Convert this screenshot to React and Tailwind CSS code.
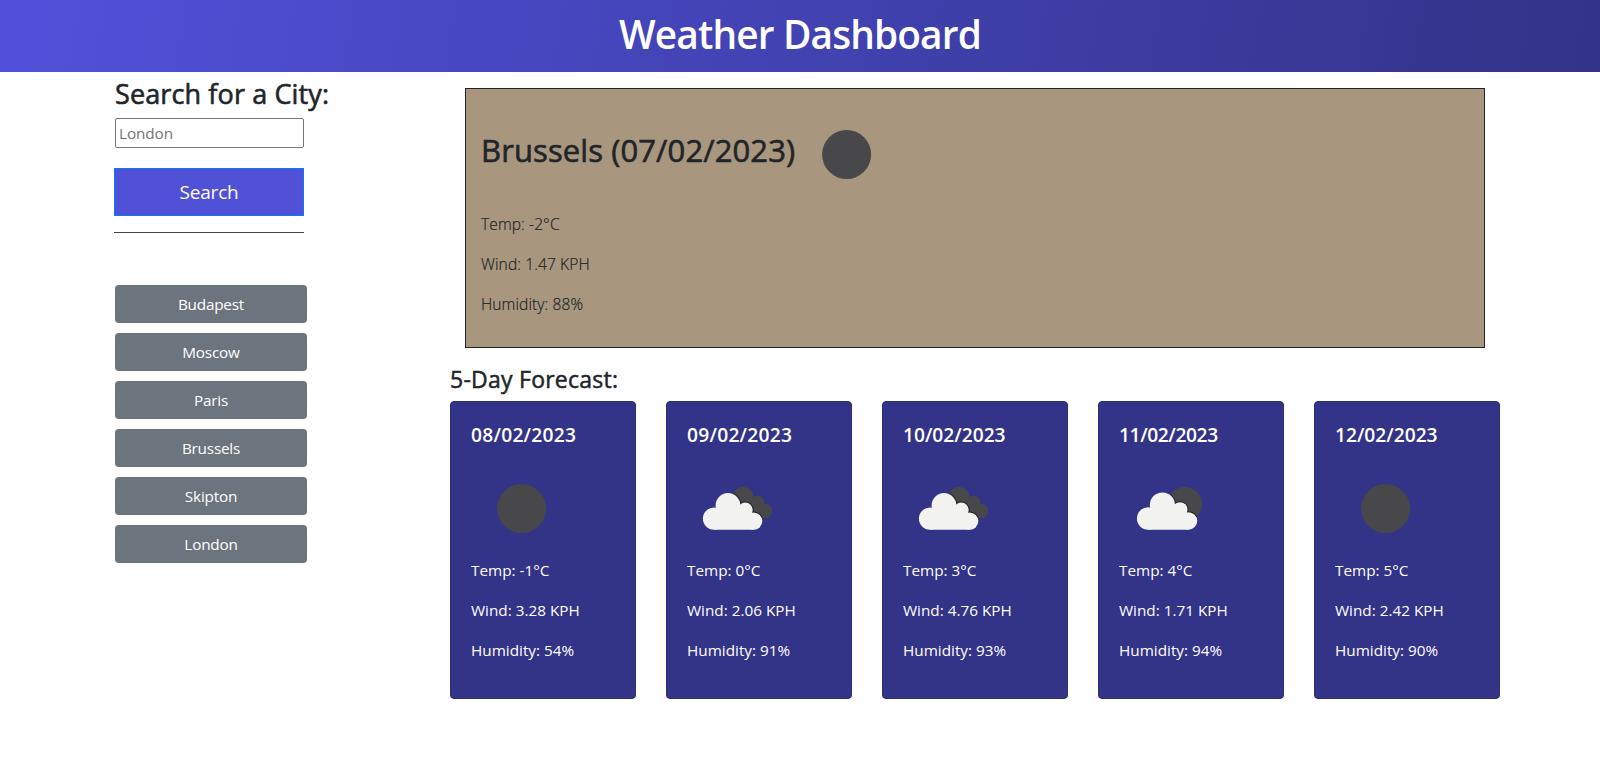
import React from "react";

const history = ["Budapest", "Moscow", "Paris", "Brussels", "Skipton", "London"];

const forecast = [
  { date: "08/02/2023", tracking: "tracking-[0.25px]", icon: "clear", temp: "-1", wind: "3.28", humidity: 54 },
  { date: "09/02/2023", tracking: "tracking-[0.25px]", icon: "broken", temp: "0", wind: "2.06", humidity: 91 },
  { date: "10/02/2023", tracking: "tracking-[-0.02px]", icon: "broken", temp: "3", wind: "4.76", humidity: 93 },
  { date: "11/02/2023", tracking: "tracking-[-0.4px]", icon: "few", temp: "4", wind: "1.71", humidity: 94 },
  { date: "12/02/2023", tracking: "tracking-[-0.02px]", icon: "clear", temp: "5", wind: "2.42", humidity: 90 },
];

function CloudShape() {
  return (
    <>
      <circle cx="27" cy="60.6" r="11.1" />
      <circle cx="41" cy="47.4" r="12.4" />
      <circle cx="58.3" cy="52" r="7.4" />
      <circle cx="66.7" cy="63.1" r="8.6" />
      <path d="M27 71.7H66.7V58L58 50L41 47L27 52Z" />
    </>
  );
}

function FrontCloud({ clip }) {
  return (
    <>
      <g clipPath={`url(#${clip})`} fill="#232326" stroke="#232326" strokeWidth="2">
        <CloudShape />
      </g>
      <g fill="#f2f2f0">
        <CloudShape />
      </g>
    </>
  );
}

function BackClouds() {
  return (
    <>
      <circle cx="56" cy="39" r="10.2" />
      <circle cx="70.6" cy="44" r="6.6" />
      <circle cx="77.8" cy="53.1" r="7.3" />
      <path d="M56 39L70 40L78 53L76 60.4L60 56Z" />
    </>
  );
}

function WeatherIcon({ kind, id, className = "" }) {
  return (
    <svg viewBox="0 0 100 100" className={`size-[100px] shrink-0 ${className}`}>
      {kind === "clear" && <circle cx="50.6" cy="50.5" r="24.5" fill="#48484a" />}
      {kind === "broken" && (
        <>
          <clipPath id={id}>
            <BackClouds />
          </clipPath>
          <g fill="#48484a">
            <BackClouds />
          </g>
          <FrontCloud clip={id} />
        </>
      )}
      {kind === "few" && (
        <>
          <clipPath id={id}>
            <circle cx="65.7" cy="46.3" r="17.3" />
          </clipPath>
          <circle cx="65.7" cy="46.3" r="17.3" fill="#48484a" />
          <g clipPath={`url(#${id})`} fill="#232326" stroke="#232326" strokeWidth="2">
            <g transform="translate(1.8 -1.1) scale(1.015)">
              <CloudShape />
            </g>
          </g>
          <g fill="#f2f2f0" transform="translate(1.8 -1.1) scale(1.015)">
            <CloudShape />
          </g>
        </>
      )}
    </svg>
  );
}

function ForecastCard({ day, index }) {
  return (
    <article className="h-[298px] w-[186px] rounded-[4px] border border-[#2e2e7a] bg-[#333388] p-5 text-white">
      <h4 className={`mt-px text-[19.2px] font-semibold leading-6 ${day.tracking}`}>{day.date}</h4>
      <WeatherIcon kind={day.icon} id={`icon-${index}`} className="mt-[11px]" />
      <div className="flex flex-col gap-4 whitespace-nowrap text-[15.3px] leading-6">
        <p>Temp: {day.temp}°C</p>
        <p>Wind: {day.wind} KPH</p>
        <p>Humidity: {day.humidity}%</p>
      </div>
    </article>
  );
}

export default function App() {
  return (
    <div className="min-h-[757px] bg-white font-['Open_Sans','Noto_Sans',sans-serif] text-[#212529]">
      <header className="flex h-[72px] items-center justify-center bg-[linear-gradient(100deg,#5151dc,#333388)]">
        <h1 className="pb-[5px] text-[38.8px] font-semibold leading-[48px] tracking-[-0.85px] text-white">
          Weather Dashboard
        </h1>
      </header>
      <div className="flex">
        <aside className="w-[450px] pl-[114px] pt-[5px]">
          <h2 className="whitespace-nowrap pl-px text-[27px] leading-[34px] tracking-[0.12px] [-webkit-text-stroke:0.6px]">
            Search for a City:
          </h2>
          <input
            placeholder="London"
            className="ml-px mt-[7px] block h-[30px] w-[189px] rounded-[2px] border border-[#767676] px-[3px] text-[15.3px] tracking-[-0.1px] placeholder:text-[#757575]"
          />
          <button className="mt-5 block h-12 w-[190px] border border-[#007bff] bg-[#5151d8] pt-px text-[19px] tracking-[-0.2px] text-white">
            Search
          </button>
          <hr className="mt-4 w-[190px] border-t border-[#444444]" />
          <div className="ml-px mt-[52px] flex w-[192px] flex-col gap-[10px]">
            {history.map((city) => (
              <button
                key={city}
                className="h-[38px] rounded-[4px] bg-[#6c757d] text-[15.3px] leading-6 tracking-[-0.2px] text-white"
              >
                {city}
              </button>
            ))}
          </div>
        </aside>
        <main className="w-[1050px]">
          <section className="ml-[15px] mt-4 h-[260px] w-[1020px] border border-[#212529] bg-[#a8967e] px-[15px] pt-[15px]">
            <div className="flex items-center">
              <h2 className="mb-[9px] mr-px whitespace-nowrap text-[31px] leading-[38px] tracking-[0.1px] [-webkit-text-stroke:0.6px]">
                Brussels (07/02/2023)
              </h2>
              <WeatherIcon kind="clear" id="today" />
            </div>
            <div className="mt-2 flex flex-col gap-4 text-[15.6px] font-light leading-6 tracking-[0.08px] [-webkit-text-stroke:0.2px]">
              <p>Temp: -2°C</p>
              <p>Wind: 1.47 KPH</p>
              <p>Humidity: 88%</p>
            </div>
          </section>
          <h3 className="mt-[17px] text-[23px] leading-[29px] tracking-[0.25px] [-webkit-text-stroke:0.5px]">
            5-Day Forecast:
          </h3>
          <div className="mt-[7px] flex gap-[30px]">
            {forecast.map((day, i) => (
              <ForecastCard key={day.date} day={day} index={i} />
            ))}
          </div>
        </main>
      </div>
    </div>
  );
}
